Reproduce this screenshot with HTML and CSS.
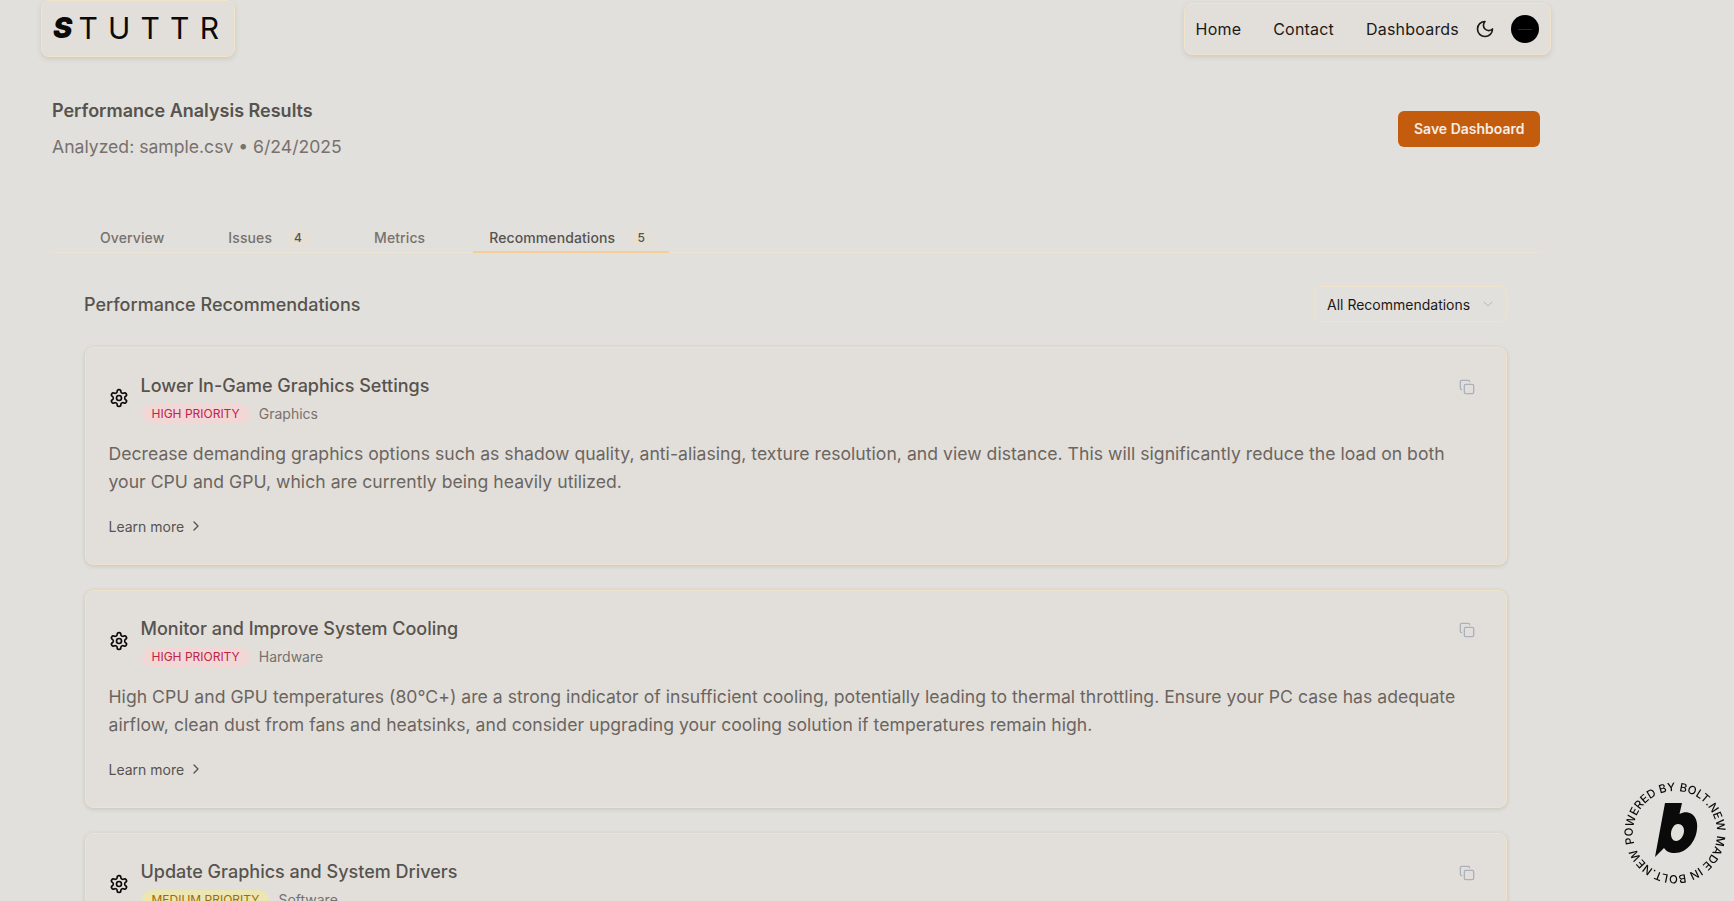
FILE: index.html
```html
<!DOCTYPE html>
<html lang="en">
<head>
<meta charset="utf-8">
<title>STUTTR – Performance Analysis</title>
<link rel="stylesheet" href="styles.css">
</head>
<body>
<div class="page">
  <header class="topbar">
    <a class="logo"><span class="logo-s">S</span><span>T</span><span>U</span><span>T</span><span>T</span><span>R</span></a>
    <nav class="nav">
      <a class="nav-link">Home</a>
      <a class="nav-link">Contact</a>
      <a class="nav-link">Dashboards</a>
      <svg class="moon" viewBox="0 0 24 24"><path d="M12 3a6 6 0 0 0 9 9 9 9 0 1 1-9-9Z"/></svg>
      <span class="avatar"><span class="avatar-mark"></span></span>
    </nav>
  </header>

  <main class="main">
    <div class="results-head">
      <div>
        <h1 class="results-title">Performance Analysis Results</h1>
        <p class="results-sub">Analyzed: sample.csv • 6/24/2025</p>
      </div>
      <button class="save">Save Dashboard</button>
    </div>

    <div class="tabs">
      <a class="tab">Overview</a>
      <a class="tab">Issues<span class="count">4</span></a>
      <a class="tab">Metrics</a>
      <a class="tab active">Recommendations<span class="count">5</span></a>
    </div>

    <section class="recs">
      <div class="recs-head">
        <h2 class="recs-title">Performance Recommendations</h2>
        <div class="select">All Recommendations
          <svg class="chev-down" viewBox="0 0 24 24"><path d="m6 9 6 6 6-6"/></svg>
        </div>
      </div>

      <article class="card">
        <div class="card-top">
          <div class="card-head">
            <svg class="gear" viewBox="0 0 24 24"><path d="M12.22 2h-.44a2 2 0 0 0-2 2v.18a2 2 0 0 1-1 1.73l-.43.25a2 2 0 0 1-2 0l-.15-.08a2 2 0 0 0-2.73.73l-.22.38a2 2 0 0 0 .73 2.73l.15.1a2 2 0 0 1 1 1.72v.51a2 2 0 0 1-1 1.74l-.15.09a2 2 0 0 0-.73 2.73l.22.38a2 2 0 0 0 2.73.73l.15-.08a2 2 0 0 1 2 0l.43.25a2 2 0 0 1 1 1.73V20a2 2 0 0 0 2 2h.44a2 2 0 0 0 2-2v-.18a2 2 0 0 1 1-1.73l.43-.25a2 2 0 0 1 2 0l.15.08a2 2 0 0 0 2.73-.73l.22-.39a2 2 0 0 0-.73-2.73l-.15-.08a2 2 0 0 1-1-1.74v-.5a2 2 0 0 1 1-1.74l.15-.09a2 2 0 0 0 .73-2.73l-.22-.38a2 2 0 0 0-2.73-.73l-.15.08a2 2 0 0 1-2 0l-.43-.25a2 2 0 0 1-1-1.73V4a2 2 0 0 0-2-2z"/><circle cx="12" cy="12" r="3"/></svg>
            <div>
              <h3 class="card-title">Lower In-Game Graphics Settings</h3>
              <div class="meta"><span class="pill high">HIGH PRIORITY</span><span class="cat">Graphics</span></div>
            </div>
          </div>
          <svg class="copy" viewBox="0 0 24 24"><rect x="8" y="8" width="14" height="14" rx="2"/><path d="M4 16c-1.1 0-2-.9-2-2V4c0-1.1.9-2 2-2h10c1.1 0 2 .9 2 2"/></svg>
        </div>
        <p class="desc">Decrease demanding graphics options such as shadow quality, anti-aliasing, texture resolution, and view distance. This will significantly reduce the load on both your CPU and GPU, which are currently being heavily utilized.</p>
        <a class="learn">Learn more<svg class="chev-right" viewBox="0 0 24 24"><path d="m9 18 6-6-6-6"/></svg></a>
      </article>

      <article class="card">
        <div class="card-top">
          <div class="card-head">
            <svg class="gear" viewBox="0 0 24 24"><path d="M12.22 2h-.44a2 2 0 0 0-2 2v.18a2 2 0 0 1-1 1.73l-.43.25a2 2 0 0 1-2 0l-.15-.08a2 2 0 0 0-2.73.73l-.22.38a2 2 0 0 0 .73 2.73l.15.1a2 2 0 0 1 1 1.72v.51a2 2 0 0 1-1 1.74l-.15.09a2 2 0 0 0-.73 2.73l.22.38a2 2 0 0 0 2.73.73l.15-.08a2 2 0 0 1 2 0l.43.25a2 2 0 0 1 1 1.73V20a2 2 0 0 0 2 2h.44a2 2 0 0 0 2-2v-.18a2 2 0 0 1 1-1.73l.43-.25a2 2 0 0 1 2 0l.15.08a2 2 0 0 0 2.73-.73l.22-.39a2 2 0 0 0-.73-2.73l-.15-.08a2 2 0 0 1-1-1.74v-.5a2 2 0 0 1 1-1.74l.15-.09a2 2 0 0 0 .73-2.73l-.22-.38a2 2 0 0 0-2.73-.73l-.15.08a2 2 0 0 1-2 0l-.43-.25a2 2 0 0 1-1-1.73V4a2 2 0 0 0-2-2z"/><circle cx="12" cy="12" r="3"/></svg>
            <div>
              <h3 class="card-title">Monitor and Improve System Cooling</h3>
              <div class="meta"><span class="pill high">HIGH PRIORITY</span><span class="cat">Hardware</span></div>
            </div>
          </div>
          <svg class="copy" viewBox="0 0 24 24"><rect x="8" y="8" width="14" height="14" rx="2"/><path d="M4 16c-1.1 0-2-.9-2-2V4c0-1.1.9-2 2-2h10c1.1 0 2 .9 2 2"/></svg>
        </div>
        <p class="desc">High CPU and GPU temperatures (80°C+) are a strong indicator of insufficient cooling, potentially leading to thermal throttling. Ensure your PC case has adequate airflow, clean dust from fans and heatsinks, and consider upgrading your cooling solution if temperatures remain high.</p>
        <a class="learn">Learn more<svg class="chev-right" viewBox="0 0 24 24"><path d="m9 18 6-6-6-6"/></svg></a>
      </article>

      <article class="card">
        <div class="card-top">
          <div class="card-head">
            <svg class="gear" viewBox="0 0 24 24"><path d="M12.22 2h-.44a2 2 0 0 0-2 2v.18a2 2 0 0 1-1 1.73l-.43.25a2 2 0 0 1-2 0l-.15-.08a2 2 0 0 0-2.73.73l-.22.38a2 2 0 0 0 .73 2.73l.15.1a2 2 0 0 1 1 1.72v.51a2 2 0 0 1-1 1.74l-.15.09a2 2 0 0 0-.73 2.73l.22.38a2 2 0 0 0 2.73.73l.15-.08a2 2 0 0 1 2 0l.43.25a2 2 0 0 1 1 1.73V20a2 2 0 0 0 2 2h.44a2 2 0 0 0 2-2v-.18a2 2 0 0 1 1-1.73l.43-.25a2 2 0 0 1 2 0l.15.08a2 2 0 0 0 2.73-.73l.22-.39a2 2 0 0 0-.73-2.73l-.15-.08a2 2 0 0 1-1-1.74v-.5a2 2 0 0 1 1-1.74l.15-.09a2 2 0 0 0 .73-2.73l-.22-.38a2 2 0 0 0-2.73-.73l-.15.08a2 2 0 0 1-2 0l-.43-.25a2 2 0 0 1-1-1.73V4a2 2 0 0 0-2-2z"/><circle cx="12" cy="12" r="3"/></svg>
            <div>
              <h3 class="card-title">Update Graphics and System Drivers</h3>
              <div class="meta"><span class="pill medium">MEDIUM PRIORITY</span><span class="cat">Software</span></div>
            </div>
          </div>
          <svg class="copy" viewBox="0 0 24 24"><rect x="8" y="8" width="14" height="14" rx="2"/><path d="M4 16c-1.1 0-2-.9-2-2V4c0-1.1.9-2 2-2h10c1.1 0 2 .9 2 2"/></svg>
        </div>
      </article>
    </section>
  </main>
</div>

<svg class="bolt" viewBox="0 0 112 112">
  <defs><path id="ring" d="M15.4 66.9A42 42 0 1 1 96.6 45.1A42 42 0 1 1 15.4 66.9"/></defs>
  <text class="bolt-text" textLength="259"><textPath href="#ring">POWERED BY BOLT.NEW MADE IN BOLT.NEW</textPath></text>
  <path class="bolt-b" fill-rule="evenodd" d="M46 26H63L60.5 37C64 35 67 35 69 35.5C76 37 79 44 78 52C77 64 68 76 56 76C50 76 47 74 45 71L36 80ZM59 47C55 47 52 52 52 57C52 61 54 64 57 64C61 64 65 59 65 54C65 50 63 47 59 47Z"/>
</svg>
</body>
</html>
```
FILE: styles.css
```css
* { box-sizing: border-box; }
html, body { margin: 0; height: 100%; overflow: hidden; }
body {
  background: #e1e0dc;
  font-family: Inter, "Liberation Sans", sans-serif;
  color: #57534e;
}
h1, h2, h3, p { margin: 0; }

.page { padding: 0 183px 0 41px; }

.topbar { display: flex; justify-content: space-between; align-items: flex-start; }

.logo {
  display: flex;
  justify-content: space-between;
  align-items: center;
  width: 194px;
  height: 57px;
  padding: 0 15px 2px 11px;
  background: #e2dfdb;
  border: 1px solid #efe3cc;
  border-radius: 8px;
  box-shadow: 0 2px 5px rgba(120, 100, 70, .18);
  font-size: 30px;
  line-height: 1;
  font-weight: 400;
  color: #0c0a09;
}
.logo-s { font-weight: 900; font-style: italic; font-size: 29px; margin-right: -4px; }

.nav {
  display: flex;
  align-items: center;
  margin-top: 3px;
  height: 52px;
  padding: 0 11px;
  background: #e2dfdb;
  border: 1px solid #efe3cc;
  border-radius: 8px;
  box-shadow: 0 2px 5px rgba(120, 100, 70, .18);
}
.nav-link { font-size: 16px; line-height: 24px; letter-spacing: .2px; color: #1c1917; margin-right: 32px; }
.nav-link:nth-child(3) { margin-right: 16px; }
.moon { width: 20px; height: 20px; fill: none; stroke: #1c1917; stroke-width: 2; stroke-linecap: round; stroke-linejoin: round; margin-right: 16px; }
.avatar { display: flex; align-items: center; justify-content: center; width: 28px; height: 28px; border-radius: 50%; background: #000; }
.avatar-mark { width: 14px; height: 1px; background: #2a2a2a; }

.main { padding: 0 0 0 11px; margin-right: 11px; }

.results-head { display: flex; justify-content: space-between; align-items: center; margin-top: 40px; }
.results-title { font-size: 18px; line-height: 28px; font-weight: 600; color: #57534e; margin-bottom: 8px; }
.results-sub { font-size: 17.6px; line-height: 28px; color: #78716c; }
.save {
  height: 36px;
  padding: 0 15.5px;
  border: 0;
  border-radius: 6px;
  background: #c45c0e;
  color: #f3ede6;
  font: 600 14px/20px Inter, "Liberation Sans", sans-serif;
}

.tabs { display: flex; gap: 32px; margin-top: 59px; padding-left: 32px; border-bottom: 1px solid #ece3d2; height: 33px; }
.tab { display: flex; align-items: center; height: 33px; padding: 4px 16px 0; font-size: 14px; font-weight: 500; letter-spacing: .1px; color: #78716c; border-bottom: 2px solid transparent; }
.tab.active { color: #57534e; border-bottom-color: #f5cd95; }
.count { display: flex; align-items: center; justify-content: center; width: 24px; height: 20px; margin-left: 14px; border-radius: 10px; background: #e5dfd6; color: #57534e; font-size: 12px; }

.recs { padding: 33px 33px 0 32px; }
.recs-head { display: flex; justify-content: space-between; align-items: center; margin-bottom: 25px; }
.recs-title { font-size: 18px; line-height: 28px; font-weight: 500; color: #57534e; padding-top: 1px; }
.select {
  display: flex;
  align-items: center;
  justify-content: space-between;
  width: 193px;
  height: 36px;
  padding: 0 10px 0 12px;
  background: #e2e0dc;
  border: 1px solid #efe3cc;
  border-radius: 6px;
  font-size: 14px;
  color: #1c1917;
}
.chev-down { width: 16px; height: 16px; fill: none; stroke: #b9b5b0; stroke-width: 1.5; stroke-linecap: round; stroke-linejoin: round; }

.card {
  height: 218px;
  margin: 0 0 25px 1px;
  padding: 24px 23px 24px 22.5px;
  background: #e2dfdb;
  border: 1px solid #efe3cc;
  border-radius: 8px;
  box-shadow: 0 1px 4px rgba(120, 100, 70, .22);
}
.card-top { display: flex; justify-content: space-between; align-items: flex-start; }
.card-head { display: flex; align-items: center; gap: 12px; }
.gear { width: 20px; height: 20px; fill: none; stroke: #0c0a09; stroke-width: 2; stroke-linecap: round; stroke-linejoin: round; }
.card-title { font-size: 18px; line-height: 28px; font-weight: 500; color: #57534e; }
.meta { display: flex; align-items: center; gap: 9px; margin-top: 4px; margin-left: 1px; }
.pill { height: 20px; padding: 0 10px; border-radius: 10px; font-size: 12px; line-height: 20px; }
.pill.high { background: #f2d7d7; color: #be2346; }
.pill.medium { background: #ebe6b2; color: #a1690a; }
.cat { font-size: 14px; line-height: 20px; color: #78716c; }
.copy { width: 16px; height: 16px; margin: 7px 8px 0 0; fill: none; stroke: #aab1bc; stroke-width: 2; stroke-linecap: round; stroke-linejoin: round; }

.desc { margin-top: 16px; font-size: 17.6px; line-height: 28px; letter-spacing: .025px; color: #6b6560; }
.learn { display: flex; align-items: center; gap: 4px; margin-top: 16px; height: 28px; font-size: 14px; color: #57534e; }
.chev-right { width: 16px; height: 16px; fill: none; stroke: #57534e; stroke-width: 2; stroke-linecap: round; stroke-linejoin: round; }

.bolt { position: fixed; right: 3px; bottom: 12px; width: 112px; height: 112px; }
.bolt-text { font: 500 11.5px Inter, "Liberation Sans", sans-serif; fill: #0c0a09; }
.bolt-b { fill: #0a0a0a; }
```
